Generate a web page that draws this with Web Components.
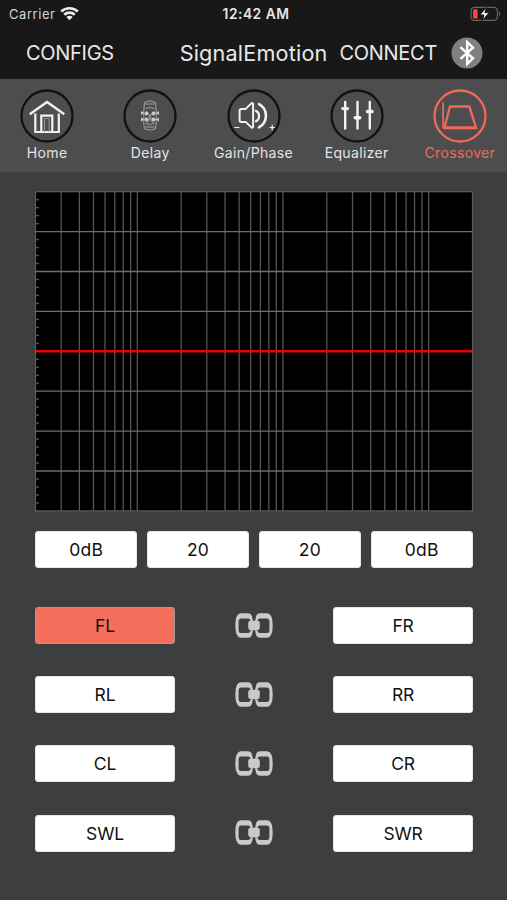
<!DOCTYPE html>
<html lang="en">
<head>
<meta charset="utf-8">
<title>SignalEmotion</title>
<style>
  html, body { margin: 0; height: 100%; }
  body {
    background: #3d3e40;
    font-family: Inter, "Liberation Sans", sans-serif;
    overflow: hidden;
  }
</style>
</head>
<body>
<crossover-screen></crossover-screen>

<script>
class StatusBar extends HTMLElement {
  constructor() {
    super();
    this.attachShadow({ mode: 'open' }).innerHTML = `
      <style>
        :host {
          display: grid;
          grid-template-columns: 1fr auto 1fr;
          align-items: center;
          height: 27px;
          padding: 0 6px 0 9px;
          color: #e6e6e6;
          font-size: 13px;
        }
        .left { display: flex; align-items: center; gap: 5px; }
        .left span { letter-spacing: 0.55px; color: #d4d4d4; }
        .time { font-weight: 600; font-size: 13.8px; letter-spacing: 0.5px; margin-left: 2px; }
        .battery { justify-self: end; }
        svg { display: block; }
      </style>
      <div class="left">
        <span>Carrier</span>
        <svg width="19" height="15" viewBox="0 0 19 15">
          <g fill="none" stroke="#eee" stroke-width="2.6">
            <path d="M1.2 5.6a12 12 0 0 1 16.6 0"/>
            <path d="M4.3 8.7a7.6 7.6 0 0 1 10.4 0"/>
          </g>
          <path d="M6.3 11.1a4.6 4.6 0 0 1 6.4 0L9.5 14.3z" fill="#eee"/>
        </svg>
      </div>
      <div class="time">12:42 AM</div>
      <svg class="battery" width="31" height="16" viewBox="0 0 31 16">
        <rect x="1" y="1.4" width="26.4" height="13" rx="3.6" fill="none" stroke="#666" stroke-width="1.2"/>
        <path d="M29 5.5v4.8c1.8-.8 1.8-4 0-4.8z" fill="#666"/>
        <path d="M4.6 3.2h3v9.4h-3q-1.6 0-1.6-1.6V4.8q0-1.6 1.6-1.6z" fill="#fb4336"/>
        <path d="M16.6 1.2 9.8 9h4.2l-1.8 5.6 7-7.9h-4.3z" fill="#fff" stroke="#181818" stroke-width="1"/>
      </svg>`;
  }
}
customElements.define('status-bar', StatusBar);

class NavBar extends HTMLElement {
  constructor() {
    super();
    this.attachShadow({ mode: 'open' }).innerHTML = `
      <style>
        :host {
          display: flex;
          align-items: center;
          height: 52px;
          padding: 0 24px 0 26px;
          color: #e9e9e9;
          font-size: 20px;
          line-height: 50px;
        }
        .configs { letter-spacing: -0.3px; }
        .title { margin-left: auto; font-size: 21.6px; letter-spacing: 0.2px; }
        .connect { margin: 0 14px 0 12px; letter-spacing: -0.3px; }
        svg { display: block; }
      </style>
      <span class="configs"><slot name="left"></slot></span>
      <span class="title"><slot></slot></span>
      <span class="connect"><slot name="right"></slot></span>
      <svg width="32" height="32" viewBox="0 0 32 32">
        <circle cx="16" cy="16" r="15.5" fill="#808080"/>
        <path d="M9.5 10.2 22 21.3 16.2 27V5L22 10.7 9.5 21.8" fill="none" stroke="#fff" stroke-width="2.4"/>
      </svg>`;
  }
}
customElements.define('nav-bar', NavBar);

const TAB_ICONS = {
  home: `
    <g fill="none" stroke="#f2f2f2" stroke-width="2">
      <path d="M9.8 25.3 27 13l17.3 12.3" stroke-width="2.4"/>
      <path d="M15.3 24.5V43h23.500V24.5" stroke-width="2.2"/>
      <path d="M21.300 43V26.600h11V43" stroke-width="2.2"/>
      <path d="M24.500 43V29.500h4.700V43" stroke-width="1" stroke="#999"/>
    </g>`,
  delay: `
    <g fill="none" stroke="#a2a2a2" stroke-width="1">
      <path d="M21.500 13.400q5.500-3 11 0l.7 7.600v14l-.7 4.800q-5.500 2.600-11 0l-.7-4.800V21z"/>
      <path d="M22.500 19.500q4.500-2 9 0M22.500 34.500q4.500 2 9 0M22 15h10M22.300 38h9.400"/>
      <path d="M23 22l3.300 3.500v6L23 34.500M31 22l-3.300 3.500v6l3.300 3"/>
    </g>
    <g fill="#c9c9c9">
      <circle cx="23.500" cy="24.500" r="2"/><circle cx="30.500" cy="24.500" r="2"/>
      <circle cx="23.500" cy="30.500" r="2"/><circle cx="30.500" cy="30.500" r="2"/>
      <path d="M18 22l3.500 2-3.500 2zM18 28.500l3.500 2-3.500 2zM36 22l-3.500 2 3.500 2zM36 28.500l-3.500 2 3.500 2z"/>
    </g>`,
  gain: `
    <g fill="none" stroke="#f2f2f2" stroke-width="2" stroke-linejoin="round" stroke-linecap="round">
      <path d="M12.600 21.500q0-1.600 1.600-1.600h4.500l5.600-5.500q1.800-1 1.800 1v22q0 2-1.800 1l-5.600-5.500h-4.500q-1.600 0-1.600-1.600z"/>
      <path d="M28.900 21.700a6 6 0 0 1 0 10.600" stroke-width="2.200"/>
      <path d="M32 15.200a13.200 13.200 0 0 1 0 23.200" stroke-width="2.600"/>
      <path d="M7.800 38.500h4.200M43 38.500h4.400M45.200 36.300v4.400" stroke-width="1.200"/>
    </g>`,
  equalizer: `
    <g stroke="#f2f2f2" stroke-width="2.400" stroke-linecap="round">
      <path d="M15.200 13v26.500M27.500 13v26.500M39.800 13v26.500"/>
      <path d="M12.900 19.600h4.600M25.200 28.700h4.600M37.500 22.500h4.600" stroke-width="3.400"/>
    </g>`,
  crossover: `
    <g fill="none" stroke="#ef6b58" stroke-width="2.300">
      <path d="M10.100 13.500V39.500M10.100 39.500H44.500" stroke-width="1.700"/>
      <path d="M11.500 38.500 17 17.500h19.300L43 38.500z"/>
    </g>`
};

class TabItem extends HTMLElement {
  constructor() {
    super();
    this.attachShadow({ mode: 'open' });
  }

  connectedCallback() {
    this.shadowRoot.innerHTML = `
      <style>
        :host {
          --ring: #111113;
          display: flex;
          flex-direction: column;
          align-items: center;
          color: #e4e4e4;
          font-size: 14px;
          line-height: 20px;
        }
        :host([active]) { --ring: #ef6b58; color: #ef6b58; }
        svg { display: block; }
        circle.ring { fill: none; stroke: var(--ring); stroke-width: 2.3; }
        .label { letter-spacing: 0.35px; white-space: nowrap; }
      </style>
      <svg width="54" height="54" viewBox="0 0 54 54">
        <circle class="ring" cx="27" cy="27" r="25.5"/>
        ${TAB_ICONS[this.getAttribute('icon')]}
      </svg>
      <span class="label"><slot></slot></span>`;
  }
}
customElements.define('tab-item', TabItem);

class TabStrip extends HTMLElement {
  constructor() {
    super();
    this.attachShadow({ mode: 'open' }).innerHTML = `
      <style>
        :host {
          display: grid;
          grid-template-columns: repeat(5, 103.2px);
          justify-content: center;
          box-sizing: border-box;
          height: 93px;
          padding-top: 10px;
          background: #4d4d4f;
          overflow: hidden;
        }
      </style>
      <slot></slot>`;
  }
}
customElements.define('tab-strip', TabStrip);

// Frequency response plot, log scale from 20 Hz to 20 kHz
class ResponseGraph extends HTMLElement {
  constructor() {
    super();
    this.attachShadow({ mode: 'open' });
  }

  connectedCallback() {
    const width = 437;
    const height = 319.2;
    let grid = '';

    for (let decade = 10; decade <= 10000; decade *= 10) {
      for (let n = 1; n < 10; n++) {
        const freq = decade * n;
        if (freq <= 20 || freq >= 20000) continue;
        const x = 0.5 + (width * Math.log10(freq / 20)) / 3;
        grid += `<path d="M${x.toFixed(2)} 0V${height}"/>`;
      }
    }
    for (let i = 1; i < 40; i++) {
      const y = ((height * i) / 40).toFixed(2);
      grid += i % 5 ? `<path d="M0 ${y}H4"/>` : `<path class="major" d="M0 ${y}H437"/>`;
    }

    this.shadowRoot.innerHTML = `
      <style>
        :host { display: block; height: 320px; }
        svg { display: block; overflow: visible; }
        path { stroke: #555; stroke-width: 1.3; }
        path.major { stroke: #6c6c6c; }
        .response { stroke: #e0070b; stroke-width: 2.4; }
      </style>
      <svg width="438" height="320" viewBox="0 0.3 438 320">
        <rect x=".5" y="0" width="437" height="${height}" fill="#000" stroke="#5c5c5c" stroke-width="1.2"/>
        ${grid}
        <path class="response" d="M.5 ${height / 2}H437.5"/>
      </svg>`;
  }
}
customElements.define('response-graph', ResponseGraph);

class PushButton extends HTMLElement {
  constructor() {
    super();
    this.attachShadow({ mode: 'open' }).innerHTML = `
      <style>
        :host {
          display: flex;
          align-items: center;
          justify-content: center;
          box-sizing: border-box;
          height: 37px;
          border: 1px solid #e8e8e8;
          border-radius: 3px;
          background: #fff;
          color: #111;
          font-size: 17.5px;
          letter-spacing: var(--button-tracking, -0.2px);
        }
        :host([selected]) { background: #f66f5c; border-color: #a69a98; }
      </style>
      <slot></slot>`;
  }
}
customElements.define('push-button', PushButton);

class ChannelPair extends HTMLElement {
  constructor() {
    super();
    this.attachShadow({ mode: 'open' });
  }

  connectedCallback() {
    const selected = this.getAttribute('selected');
    const button = side => {
      const name = this.getAttribute(side);
      return `<push-button ${name === selected ? 'selected' : ''}>${name}</push-button>`;
    };
    this.shadowRoot.innerHTML = `
      <style>
        :host {
          display: grid;
          grid-template-columns: 140px 1fr 140px;
          align-items: center;
        }
        svg { display: block; justify-self: center; }
      </style>
      ${button('left')}
      <svg width="38" height="26" viewBox="0 0 38 26">
        <defs>
          <path id="half" fill="#c9c9c9" d="M5.500 .3h7.500q3 0 4 3.200l1 4.700h-2.200l-.8-1.700q-.5-1-2-1H6q-2.400 0-2.400 2.500v9.500q0 2.500 2.400 2.500h7q1.500 0 2-1l.8-1.700H18l-1 4.200q-1 3.200-4 3.200H5.500Q.3 24 .3 12.500T5.500 .3z"/>
        </defs>
        <use href="#half"/>
        <use href="#half" transform="matrix(-1 0 0 1 38 0)"/>
        <rect x="13.200" y="7.800" width="11.600" height="9.400" rx="2.400" fill="#c9c9c9"/>
      </svg>
      ${button('right')}`;
  }
}
customElements.define('channel-pair', ChannelPair);

class CrossoverScreen extends HTMLElement {
  constructor() {
    super();
    this.attachShadow({ mode: 'open' }).innerHTML = `
      <style>
        :host { display: block; height: 900px; }
        header { background: #181818; }
        main { padding: 20px 34px 0 35px; }
        .values {
          --button-tracking: 0.3px;
          display: grid;
          grid-template-columns: repeat(4, 1fr);
          gap: 9.5px;
          margin-top: 19px;
        }
        .channels {
          display: flex;
          flex-direction: column;
          gap: 32.2px;
          margin-top: 39px;
        }
      </style>
      <header>
        <status-bar></status-bar>
        <nav-bar>
          <span slot="left">CONFIGS</span>
          SignalEmotion
          <span slot="right">CONNECT</span>
        </nav-bar>
      </header>
      <tab-strip>
        <tab-item icon="home">Home</tab-item>
        <tab-item icon="delay">Delay</tab-item>
        <tab-item icon="gain">Gain/Phase</tab-item>
        <tab-item icon="equalizer">Equalizer</tab-item>
        <tab-item icon="crossover" active>Crossover</tab-item>
      </tab-strip>
      <main>
        <response-graph></response-graph>
        <div class="values">
          <push-button>0dB</push-button>
          <push-button>20</push-button>
          <push-button>20</push-button>
          <push-button>0dB</push-button>
        </div>
        <div class="channels">
          <channel-pair left="FL" right="FR" selected="FL"></channel-pair>
          <channel-pair left="RL" right="RR"></channel-pair>
          <channel-pair left="CL" right="CR"></channel-pair>
          <channel-pair left="SWL" right="SWR"></channel-pair>
        </div>
      </main>`;
  }
}
customElements.define('crossover-screen', CrossoverScreen);
</script>
</body>
</html>
